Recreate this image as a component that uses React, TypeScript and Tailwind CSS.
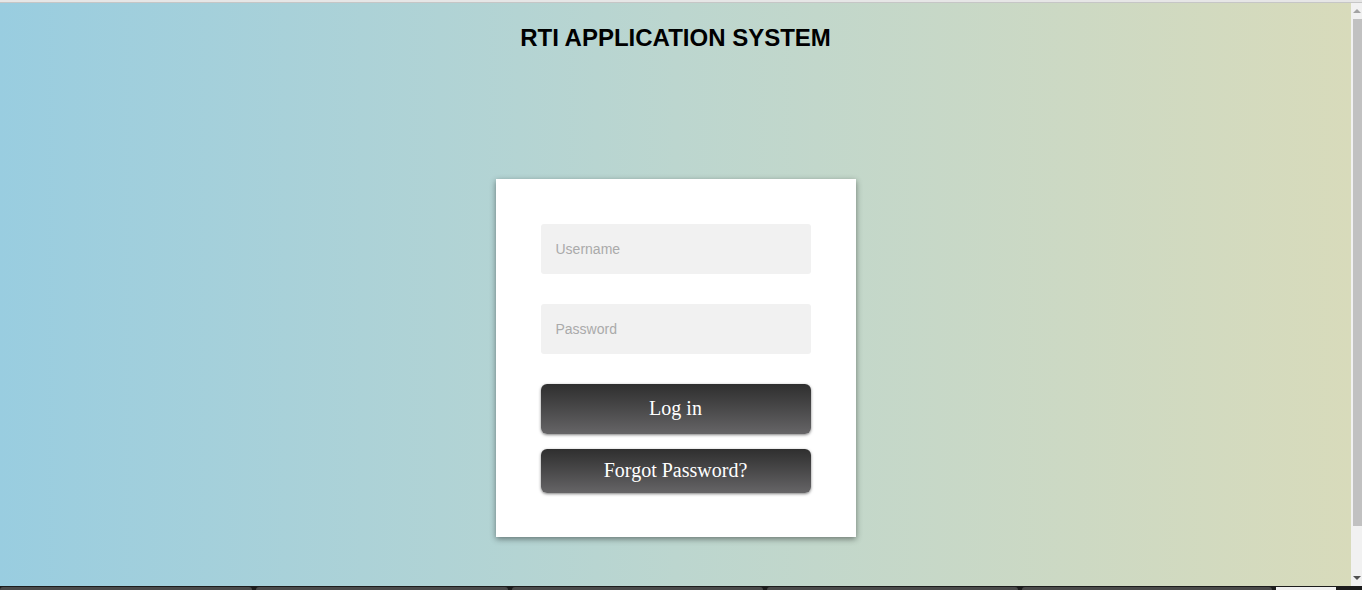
export default function App() {
    return (
        <div className="h-[590px] w-[1362px] overflow-hidden flex flex-col bg-[#e8e8e8]">
            {/* browser top edge */}
            <div className="h-[3px] bg-[#e6e6e6] border-b border-[#c6c6c6]" />

            <div className="flex flex-1 min-h-0">
                <main className="flex-1 flex flex-col items-center bg-gradient-to-r from-[#99cde0] via-[#bcd6cf] to-[#d8dbbb]">
                    <h1 className="mt-[22px] leading-[26px] text-[24px] font-bold text-black font-['Liberation_Sans',Arial,sans-serif]">
                        RTI APPLICATION SYSTEM
                    </h1>

                    {/* Card */}
                    <div className="mt-[128px] w-[360px] h-[358px] bg-white shadow-[0_2px_6px_rgba(0,0,0,0.45)] px-[45px] pt-[45px] flex flex-col">
                        <input
                            type="text"
                            placeholder="Username"
                            className="h-[50px] w-full rounded-[3px] bg-[#f1f1f1] px-[15px] text-[14px] text-gray-700 placeholder:text-[#aaaaaa] outline-none font-['Liberation_Sans',Arial,sans-serif]"
                        />
                        <input
                            type="password"
                            placeholder="Password"
                            className="mt-[30px] h-[50px] w-full rounded-[3px] bg-[#f1f1f1] px-[15px] text-[14px] text-gray-700 placeholder:text-[#aaaaaa] outline-none font-['Liberation_Sans',Arial,sans-serif]"
                        />
                        <button className="mt-[30px] h-[50px] pb-[2px] w-full rounded-[6px] bg-gradient-to-b from-[#2f2f2f] to-[#666567] text-white text-[20px] shadow-[0_1px_3px_rgba(0,0,0,0.5)] font-['Liberation_Serif','Times_New_Roman',serif]">
                            Log in
                        </button>
                        <button className="mt-[15px] h-[44px] pb-[2px] w-full rounded-[6px] bg-gradient-to-b from-[#2f2f2f] to-[#666567] text-white text-[20px] shadow-[0_1px_3px_rgba(0,0,0,0.5)] font-['Liberation_Serif','Times_New_Roman',serif]">
                            Forgot Password?
                        </button>
                    </div>
                </main>

                {/* scrollbar */}
                <div className="w-[11px] bg-[#f1f1f1] flex flex-col items-center">
                    <div className="h-[16px] flex items-center justify-center">
                        <div className="w-0 h-0 border-l-[4px] border-r-[4px] border-b-[4px] border-l-transparent border-r-transparent border-b-[#a3a3a3]" />
                    </div>
                    <div className="ml-[2px] w-[9px] h-[507px] bg-[#c1c1c1]" />
                    <div className="flex-1 flex items-end justify-center pb-[6px]">
                        <div className="w-0 h-0 border-l-[4px] border-r-[4px] border-t-[4px] border-l-transparent border-r-transparent border-t-[#505050]" />
                    </div>
                </div>
            </div>

            {/* bottom strip */}
            <div className="h-[4px] bg-[#1c1c1c] flex gap-[4px] items-end">
                <div className="w-[252px] h-[3px] rounded-t-[3px] bg-[#4a4a4a]" />
                <div className="w-[252px] h-[3px] rounded-t-[3px] bg-[#4a4a4a]" />
                <div className="w-[251px] h-[3px] rounded-t-[3px] bg-[#4a4a4a]" />
                <div className="w-[251px] h-[3px] rounded-t-[3px] bg-[#4a4a4a]" />
                <div className="w-[250px] h-[3px] rounded-t-[3px] bg-[#4a4a4a]" />
                <div className="w-[60px] h-[3px] bg-[#f0f0f0]" />
            </div>
        </div>
    );
}
